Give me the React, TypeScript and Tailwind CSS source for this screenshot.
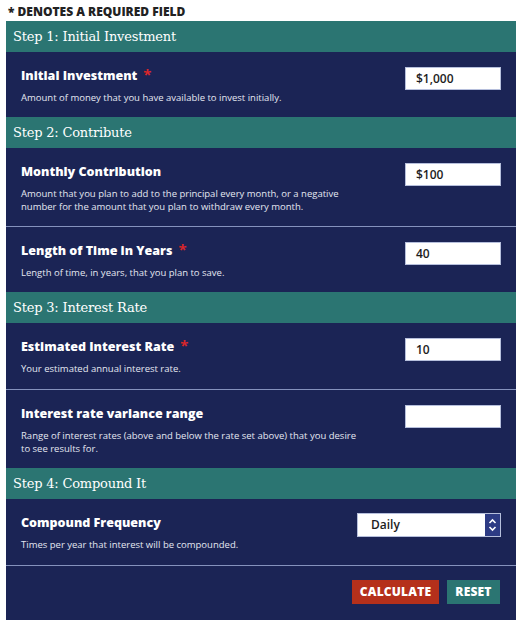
import type { ReactNode } from "react";

const sans = "font-['Open_Sans','Noto_Sans',sans-serif]";
const slab = "font-['DejaVu_Serif',serif]";

function StepHeader({ title }: { title: string }) {
  return (
    <div className={`${slab} flex h-[31px] items-center bg-[#2b7572] px-[7px] text-[13px] tracking-[-0.2px] text-white`}>
      {title}
    </div>
  );
}

function Field({
  label,
  required,
  children,
  control,
  height,
  divider,
}: {
  label: string;
  required?: boolean;
  children: ReactNode;
  control: ReactNode;
  height: string;
  divider?: boolean;
}) {
  return (
    <div className={`flex ${height} justify-between px-[15px] ${divider ? "border-b border-[#8592bd]" : ""}`}>
      <div className="min-w-0 flex-1 pt-[15px]">
        <div className="flex items-start text-[12.5px] font-extrabold leading-[18px] text-white">
          {label}
          {required ? <span className="ml-[6px] text-[15px] font-bold leading-[14px] text-[#d8262b]">*</span> : null}
        </div>
        <p className="mt-[6px] w-[340px] text-[9.5px] leading-[13px] text-[#e4e7f1]">{children}</p>
      </div>
      <div className="shrink-0 pt-[15px]">{control}</div>
    </div>
  );
}

function TextInput({ value }: { value: string }) {
  return (
    <div className="flex h-[23px] w-[96px] items-center border border-[#b6bfdc] bg-white pl-[10px] text-[12px] font-semibold text-[#1d1d1d]">
      {value}
    </div>
  );
}

function SelectBox() {
  return (
    <div className="-mt-[1px] flex h-[24px] w-[144px] border border-[#b6bfdc] bg-white">
      <div className="flex flex-1 items-center pl-[13px] text-[12px] font-semibold text-[#1d1d1d]">Daily</div>
      <div className="flex w-[15px] items-center justify-center bg-[#2d3b84]">
        <svg width="9" height="16" viewBox="0 0 9 16" fill="none" stroke="white" strokeWidth="1.6">
          <path d="M1.5 6 L4.5 3 L7.5 6" />
          <path d="M1.5 10 L4.5 13 L7.5 10" />
        </svg>
      </div>
    </div>
  );
}

export default function App() {
  return (
    <div className={`${sans} min-h-[626px] bg-white pt-[4px]`}>
      <p className="pl-[8px] text-[12px] font-extrabold leading-[16px] text-[#222]">* DENOTES A REQUIRED FIELD</p>
      <div className="ml-[6px] mt-[1px] w-[510px] bg-[#1b2455]">
        <StepHeader title="Step 1: Initial Investment" />
        <Field label="Initial Investment" required height="h-[65px]" control={<TextInput value="$1,000" />}>
          Amount of money that you have available to invest initially.
        </Field>

        <StepHeader title="Step 2: Contribute" />
        <Field label="Monthly Contribution" height="h-[79px]" divider control={<TextInput value="$100" />}>
          Amount that you plan to add to the principal every month, or a negative number for the amount that you plan to
          withdraw every month.
        </Field>
        <Field label="Length of Time in Years" required height="h-[65px]" control={<TextInput value="40" />}>
          Length of time, in years, that you plan to save.
        </Field>

        <StepHeader title="Step 3: Interest Rate" />
        <Field label="Estimated Interest Rate" required height="h-[67px]" divider control={<TextInput value="10" />}>
          Your estimated annual interest rate.
        </Field>
        <Field label="Interest rate variance range" height="h-[78px]" control={<TextInput value="" />}>
          Range of interest rates (above and below the rate set above) that you desire to see results for.
        </Field>

        <StepHeader title="Step 4: Compound It" />
        <Field label="Compound Frequency" height="h-[67px]" divider control={<SelectBox />}>
          Times per year that interest will be compounded.
        </Field>
        <div className="flex h-[54px] items-start justify-end gap-[8px] pr-[16px] pt-[14px]">
          <button className="h-[24px] w-[87px] bg-[#b5301b] text-[12px] font-extrabold tracking-[0.2px] text-white">
            CALCULATE
          </button>
          <button className="h-[24px] w-[53px] bg-[#2b7572] text-[12px] font-extrabold tracking-[0.2px] text-white">
            RESET
          </button>
        </div>
      </div>
    </div>
  );
}
